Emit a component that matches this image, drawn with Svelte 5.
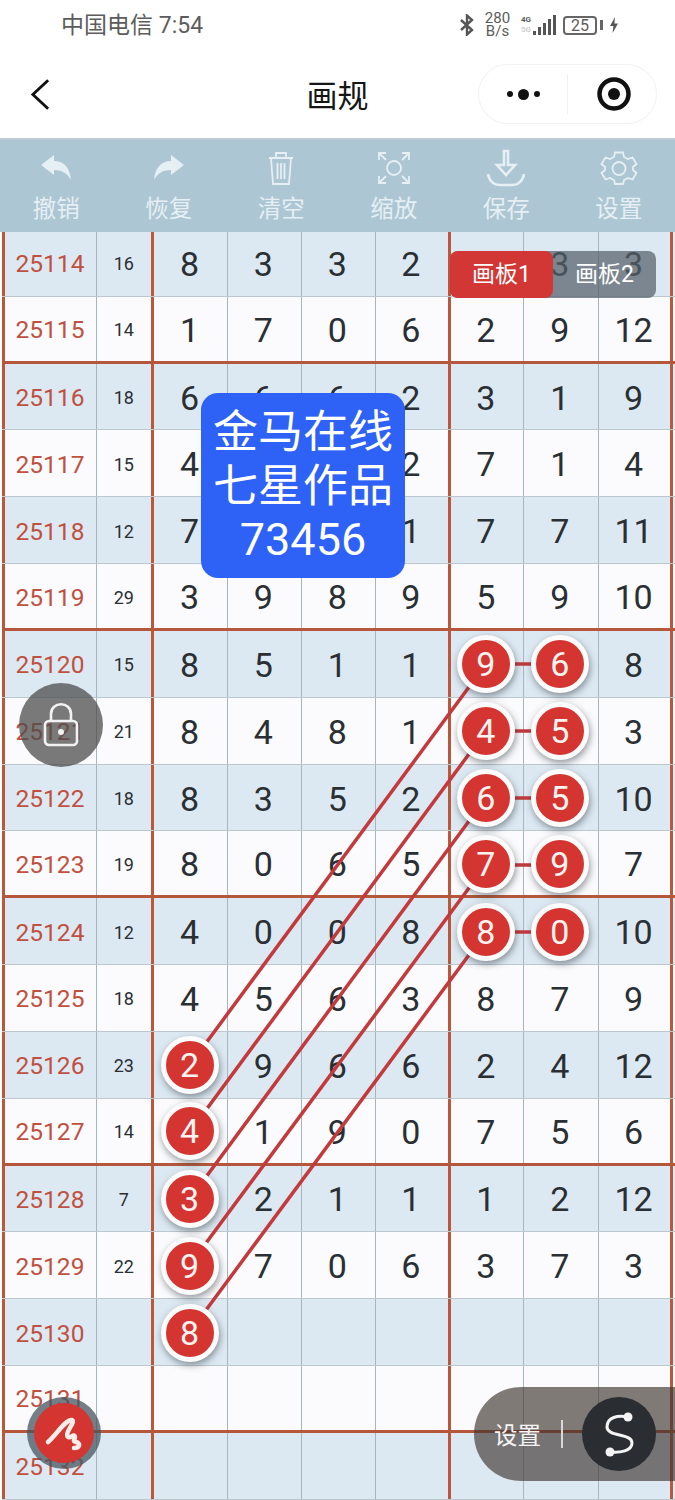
<script>
const rows = [
  ['25114', '16', '8', '3', '3', '2', '4', '3', '3'],
  ['25115', '14', '1', '7', '0', '6', '2', '9', '12'],
  ['25116', '18', '6', '6', '6', '2', '3', '1', '9'],
  ['25117', '15', '4', '6', '5', '2', '7', '1', '4'],
  ['25118', '12', '7', '2', '8', '1', '7', '7', '11'],
  ['25119', '29', '3', '9', '8', '9', '5', '9', '10'],
  ['25120', '15', '8', '5', '1', '1', '*9', '*6', '8'],
  ['25121', '21', '8', '4', '8', '1', '*4', '*5', '3'],
  ['25122', '18', '8', '3', '5', '2', '*6', '*5', '10'],
  ['25123', '19', '8', '0', '6', '5', '*7', '*9', '7'],
  ['25124', '12', '4', '0', '0', '8', '*8', '*0', '10'],
  ['25125', '18', '4', '5', '6', '3', '8', '7', '9'],
  ['25126', '23', '*2', '9', '6', '6', '2', '4', '12'],
  ['25127', '14', '*4', '1', '9', '0', '7', '5', '6'],
  ['25128', '7', '*3', '2', '1', '1', '1', '2', '12'],
  ['25129', '22', '*9', '7', '0', '6', '3', '7', '3'],
  ['25130', '', '*8', '', '', '', '', '', ''],
  ['25131', '', '', '', '', '', '', '', ''],
  ['25132', '', '', '', '', '', '', '', '']
];

// diagonal links from the left picks to the right picks
const links = [
  [189, 1066, 486, 664],
  [189, 1133, 486, 731],
  [189, 1200, 486, 798],
  [189, 1266, 486, 865],
  [189, 1333, 486, 932]
];
</script>

<div class="page">
  <div class="status">
    <span class="carrier">中国电信 7:54</span>
    <div class="status-right">
      <svg class="bt" viewBox="0 0 16 22"><path d="M2 6 L13 16 L8 20.5 L8 1.5 L13 6 L2 16"/></svg>
      <div class="speed"><span>280</span><span>B/s</span></div>
      <div class="net">
        <div class="net-labels"><span>4G</span><span class="faint">5G</span></div>
        <div class="bars"><i style="height:4px"></i><i style="height:8px"></i><i style="height:12px"></i><i style="height:16px"></i><i style="height:20px"></i></div>
      </div>
      <div class="battery">25</div>
      <div class="nub"></div>
      <svg class="bolt" viewBox="0 0 8 16"><path d="M5 0 L0 9 L3.4 9 L2.6 16 L8 6.5 L4.4 6.5 Z"/></svg>
    </div>
  </div>

  <div class="nav">
    <svg class="back" viewBox="0 0 22 34"><path d="M19 2 L3 17 L19 32"/></svg>
    <div class="title">画规</div>
    <div class="capsule">
      <div class="dots"><i></i><b></b><i></i></div>
      <div class="capsule-line"></div>
      <svg class="target" viewBox="0 0 36 36"><circle cx="18" cy="18" r="14.5"/><circle class="core" cx="18" cy="18" r="6"/></svg>
    </div>
  </div>

  <div class="toolbar">
    <div class="tool">
      <svg viewBox="0 0 40 34"><path class="fill" d="M5 14 L18 4 L18 10 C28 10 34 17 35 29 C31 22 26 19 18 19 L18 24 Z"/></svg>
      <span>撤销</span>
    </div>
    <div class="tool">
      <svg viewBox="0 0 40 34"><path class="fill" d="M35 14 L22 4 L22 10 C12 10 6 17 5 29 C9 22 14 19 22 19 L22 24 Z"/></svg>
      <span>恢复</span>
    </div>
    <div class="tool">
      <svg viewBox="0 0 40 34"><path d="M8 7 H32 M15 6 V2 H25 V6 M10 7 L12 33 H28 L30 7 M16.500 12 V28 M20 12 V28 M23.500 12 V28"/></svg>
      <span>清空</span>
    </div>
    <div class="tool">
      <svg viewBox="0 0 40 34"><path d="M5 9 V2 H12 M28 2 H35 V9 M5 25 V32 H12 M28 32 H35 V25 M6 3 L12 9 M34 3 L28 9 M6 31 L12 25 M34 31 L28 25"/><circle cx="20" cy="17" r="7"/></svg>
      <span>缩放</span>
    </div>
    <div class="tool">
      <svg class="save" viewBox="0 0 40 38"><path d="M18 2 H22 V16 H29 L20 26 L11 16 H18 Z M2 25 C3 32 8 36 14 36 H26 C32 36 37 32 38 25"/></svg>
      <span>保存</span>
    </div>
    <div class="tool">
      <svg viewBox="0 0 40 34"><path d="M16 1.500 H24 L25 6 L29 8 L33.500 6.500 L37.500 13 L34 16 V19 L37.500 22 L33.500 28.500 L29 27 L25 29 L24 33 H16 L15 29 L11 27 L6.500 28.500 L2.500 22 L6 19 V16 L2.500 13 L6.500 6.500 L11 8 L15 6 Z"/><circle cx="20" cy="17.500" r="6.500"/></svg>
      <span>设置</span>
    </div>
  </div>

  <div class="board">
    {#each rows as row, r}
      <div class="row" class:shade={r % 2 === 0} class:group-end={r % 4 === 1}>
        {#each row as cell, c}
          <div class="cell" class:issue={c === 0} class:sum={c === 1} class:heavy={c === 1 || c === 5 || c === 8}>
            {#if cell.startsWith('*')}
              <span class="pick">{cell.slice(1)}</span>
            {:else}
              {cell}
            {/if}
          </div>
        {/each}
      </div>
    {/each}
  </div>

  <svg class="links" viewBox="0 0 675 1500">
    {#each links as [x1, y1, x2, y2]}
      <line x1={x1} y1={y1} x2={x2} y2={y2}/>
      <line x1={x2} y1={y2} x2={x2 + 74} y2={y2}/>
    {/each}
  </svg>

  <div class="tabs">
    <span class="tab on">画板1</span>
    <span class="tab">画板2</span>
  </div>

  <div class="stamp">金马在线<br>七星作品<br>73456</div>

  <div class="lock">
    <svg viewBox="0 0 36 46"><path d="M8 19 V12 C8 -1 28 -1 28 12 V19"/><rect x="2" y="19" width="32" height="24" rx="4"/><circle class="dot" cx="18" cy="30" r="3"/></svg>
  </div>

  <div class="pen">
    <div class="pen-core">
      <svg viewBox="0 0 60 60"><path d="M14 39 C22 32 32 16 38 17 C42 19 30 30 34 34 C36 36 40 30 41 34 C41 37 38 38 42 39 C47 40 46 45 40 45"/></svg>
    </div>
  </div>

  <div class="pill">
    <span class="pill-text">设置</span>
    <div class="pill-line"></div>
    <div class="pill-btn">
      <svg viewBox="0 0 74 74"><path d="M46 20 C36 18 25 20 25 30 C25 40 50 36 50 46 C50 54 38 56 28 55"/><circle cx="46" cy="20" r="4.500"/><circle cx="28" cy="55" r="4.500"/></svg>
    </div>
  </div>
</div>

<style>
:global(body) {
  margin: 0;
  background: #fff;
}

.page {
  position: relative;
  width: 675px;
  height: 1500px;
  overflow: hidden;
  display: flex;
  flex-direction: column;
  font-family: Roboto, "Noto Sans CJK SC", sans-serif;
  color: #2a2f33;
}

.status {
  height: 50px;
  flex: none;
  display: flex;
  align-items: center;
  justify-content: space-between;
  padding: 0 57px 0 61px;
  color: #5c5c5c;
}

.carrier {
  font-size: 23px;
  margin-top: -4px;
}

.status-right {
  display: flex;
  align-items: center;
}

.bt {
  width: 16px;
  height: 22px;
  margin-right: 9px;
  fill: none;
  stroke: #555;
  stroke-width: 2.400;
}

.speed {
  display: flex;
  flex-direction: column;
  align-items: center;
  font-size: 15px;
  line-height: 13px;
  width: 27px;
  margin-right: 10px;
}

.net {
  display: flex;
  align-items: flex-end;
  margin-right: 7px;
  height: 20px;
}

.net-labels {
  display: flex;
  flex-direction: column;
  font-size: 8px;
  line-height: 10px;
  font-weight: 700;
  width: 12px;
}

.faint {
  opacity: .3;
}

.bars {
  display: flex;
  align-items: flex-end;
  gap: 2px;
}

.bars i {
  display: block;
  width: 3px;
  background: #555;
}

.battery {
  width: 34px;
  height: 19px;
  box-sizing: border-box;
  border: 2px solid #666;
  border-radius: 4px;
  font-size: 16px;
  line-height: 16px;
  text-align: center;
}

.nub {
  width: 3px;
  height: 10px;
  margin: 0 7px 0 3px;
  background: #666;
}

.bolt {
  width: 8px;
  height: 16px;
  fill: #555;
}

.nav {
  height: 88px;
  flex: none;
  display: grid;
  grid-template-columns: 1fr auto 1fr;
  align-items: center;
  padding: 0 18px 0 30px;
  background: #fff;
}

.back {
  width: 21px;
  height: 33px;
  fill: none;
  stroke: #111;
  stroke-width: 3;
}

.title {
  font-size: 31px;
  color: #161616;
  margin: -2px 0 0 -12px;
}

.capsule {
  justify-self: end;
  width: 179px;
  height: 60px;
  box-sizing: border-box;
  border: 1px solid #f1f1f1;
  border-radius: 30px;
  display: flex;
  align-items: center;
  background: #fff;
}

.dots {
  width: 88px;
  display: flex;
  justify-content: center;
  align-items: center;
  gap: 5px;
}

.dots i,
.dots b {
  display: block;
  border-radius: 50%;
  background: #111;
  width: 6px;
  height: 6px;
}

.dots b {
  width: 11px;
  height: 11px;
}

.capsule-line {
  width: 1px;
  height: 40px;
  background: #f1f1f1;
}

.target {
  width: 36px;
  height: 36px;
  margin-left: 28px;
  fill: none;
  stroke: #111;
  stroke-width: 4.500;
}

.target .core {
  fill: #111;
  stroke: none;
}

.toolbar {
  height: 94px;
  flex: none;
  box-sizing: border-box;
  display: flex;
  background: #acc6d4;
  border-top: 2px solid #bccad4;
}

.tool {
  flex: 1;
  display: flex;
  flex-direction: column;
  align-items: center;
  color: #e6eff3;
  font-size: 23.500px;
  line-height: 28px;
  padding-top: 11px;
}

.tool svg {
  width: 40px;
  height: 34px;
  margin-bottom: 10px;
  fill: none;
  stroke: #e6eff3;
  stroke-width: 1.800;
}

.tool svg.save {
  height: 38px;
  margin: -2px 0 8px;
  stroke-width: 2.600;
}

.tool svg .fill {
  fill: #e6eff3;
  stroke: none;
}

.board {
  flex: 1;
  min-height: 0;
  overflow: hidden;
  padding-left: 1.500px;
}

.row {
  display: grid;
  grid-template-columns: 95px 57.500px 73.500px 74px 74px 75px 73px 75px 74.500px;
  height: 66.830px;
  box-sizing: border-box;
  background: #fbfbfd;
  border-bottom: 1.500px solid #bcc7ce;
}

.row:first-child {
  height: 64.800px;
}

.row.shade {
  background: #dde9f2;
}

.row.group-end {
  border-bottom: 3.500px solid #b5573a;
}

.cell {
  display: flex;
  align-items: center;
  justify-content: center;
  box-sizing: border-box;
  padding: 2px 1.500px 0 0;
  border-right: 1.500px solid #a9b5bd;
  font-size: 34px;
}

.row:first-child .cell {
  padding-top: 0;
}

.cell.issue {
  border-left: 3.500px solid #b9583a;
  color: #c05040;
  font-size: 24.500px;
  padding-right: 0;
}

.cell.sum {
  font-size: 18px;
  padding-right: 0;
}

.cell.heavy {
  border-right: 3.500px solid #b9583a;
}

.pick {
  position: relative;
  z-index: 2;
  flex: none;
  width: 48px;
  height: 48px;
  margin-top: -1px;
  display: flex;
  align-items: center;
  justify-content: center;
  border: 5.500px solid #fbfbfb;
  border-radius: 50%;
  background: #d43531;
  color: #fdf3f0;
  font-size: 34px;
  box-shadow: 1px 3px 7px rgba(40, 50, 60, .5);
}

.links {
  position: absolute;
  left: 0;
  top: 0;
  width: 675px;
  height: 1500px;
  z-index: 1;
  pointer-events: none;
}

.links line {
  stroke: #c23a3c;
  stroke-width: 3.500;
}

.tabs {
  position: absolute;
  z-index: 3;
  left: 450px;
  top: 251px;
  width: 206px;
  height: 47px;
  display: flex;
  border-radius: 8px;
  background: rgba(85, 95, 105, .72);
  color: #fff;
  font-size: 23px;
  line-height: 47px;
}

.tab {
  flex: 1;
  text-align: center;
  border-radius: 8px;
}

.tab.on {
  background: #d23736;
}

.stamp {
  position: absolute;
  z-index: 3;
  left: 201px;
  top: 393px;
  width: 204px;
  height: 185px;
  box-sizing: border-box;
  padding-top: 13px;
  border-radius: 17px;
  background: #2e62f6;
  color: #fff;
  font-size: 45px;
  line-height: 53.500px;
  text-align: center;
}

.lock {
  position: absolute;
  z-index: 3;
  left: 19px;
  top: 683px;
  width: 84px;
  height: 84px;
  border-radius: 50%;
  background: rgba(75, 75, 75, .74);
  display: flex;
  align-items: center;
  justify-content: center;
}

.lock svg {
  width: 36px;
  height: 46px;
  fill: none;
  stroke: #f2f2f2;
  stroke-width: 2.600;
}

.lock .dot {
  fill: #f2f2f2;
  stroke: none;
}

.pen {
  position: absolute;
  z-index: 3;
  left: 27px;
  top: 1397px;
  width: 74px;
  height: 72px;
  border-radius: 50%;
  background: rgba(70, 85, 95, .75);
  display: flex;
  align-items: center;
  justify-content: center;
}

.pen-core {
  width: 60px;
  height: 60px;
  border-radius: 50%;
  background: #d43531;
}

.pen-core svg {
  display: block;
  fill: none;
  stroke: #fbeeea;
  stroke-width: 4.500;
  stroke-linecap: round;
  stroke-linejoin: round;
}

.pill {
  position: absolute;
  z-index: 3;
  left: 474px;
  top: 1387px;
  width: 201px;
  height: 94px;
  box-sizing: border-box;
  padding-left: 20px;
  border-radius: 47px 0 0 47px;
  background: rgba(62, 52, 48, .65);
  display: flex;
  align-items: center;
  color: #f4f4f4;
  font-size: 23.500px;
}

.pill-line {
  width: 1.500px;
  height: 28px;
  margin: 0 19px 0 20px;
  background: #d8d8d8;
}

.pill-btn {
  width: 74px;
  height: 74px;
  border-radius: 50%;
  background: #2a2e32;
}

.pill-btn svg {
  display: block;
  fill: none;
  stroke: #f4f4f4;
  stroke-width: 3;
}

.pill-btn circle {
  fill: #f4f4f4;
  stroke: none;
}
</style>
